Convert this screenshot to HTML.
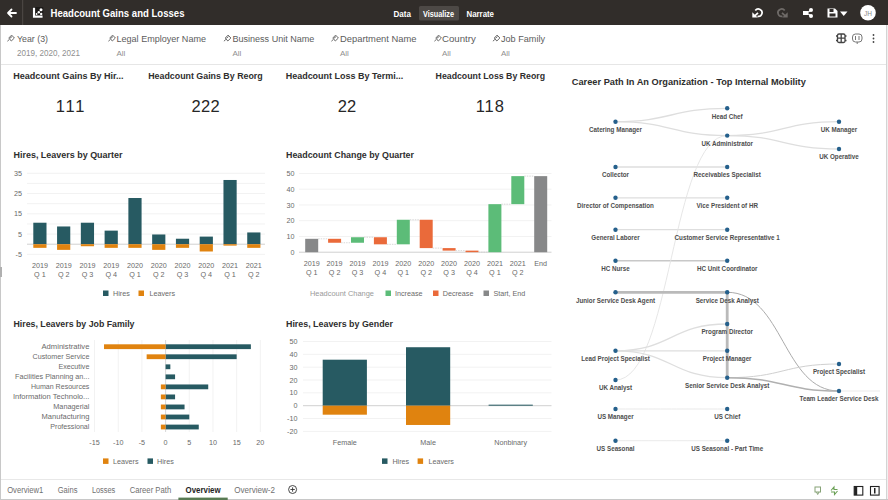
<!DOCTYPE html>
<html><head><meta charset="utf-8"><style>
html,body{margin:0;padding:0;background:#fff;width:888px;height:500px;overflow:hidden}
svg{display:block;font-family:"Liberation Sans", sans-serif}
</style></head><body>
<svg width="888" height="500" viewBox="0 0 888 500">
<rect width="888" height="500" fill="#fff"/>
<rect x="0" y="0" width="888" height="25" fill="#312d2a"/>
<rect x="22" y="0" width="1.2" height="25" fill="#4a4542"/>
<path d="M8 13 H16 M8 13 L11.5 9.5 M8 13 L11.5 16.5" stroke="#fff" stroke-width="1.8" fill="none" stroke-linecap="round"/>
<rect x="32.5" y="7" width="10.8" height="11" rx="0.8" fill="#1c1a18"/>
<path d="M34 7.8 V16.6 H42.6" stroke="#fff" stroke-width="2.2" fill="none"/>
<circle cx="41" cy="9.8" r="1.5" fill="#fff"/><circle cx="38.8" cy="12.2" r="1.2" fill="#fff"/><circle cx="41.2" cy="13.9" r="1.2" fill="#fff"/><circle cx="36.6" cy="14" r="0.9" fill="#fff"/>
<text x="50.5" y="16.8" font-size="11" fill="#fff" font-weight="bold" text-anchor="start" textLength="134" lengthAdjust="spacingAndGlyphs">Headcount Gains and Losses</text>
<rect x="419" y="6" width="40" height="14.5" rx="1.5" fill="#4d4946"/>
<text x="393.5" y="16.5" font-size="9" fill="#fff" font-weight="bold" text-anchor="start" textLength="17.5" lengthAdjust="spacingAndGlyphs">Data</text>
<text x="423" y="16.5" font-size="9" fill="#fff" font-weight="bold" text-anchor="start" textLength="31" lengthAdjust="spacingAndGlyphs">Visualize</text>
<text x="466.5" y="16.5" font-size="9" fill="#fff" font-weight="bold" text-anchor="start" textLength="27.5" lengthAdjust="spacingAndGlyphs">Narrate</text>
<path d="M755.3 10.6 A3.7 3.7 0 1 1 757.5 16.3" stroke="#fff" stroke-width="1.7" fill="none"/><path d="M758 12.8 L754.3 16.3" stroke="#fff" stroke-width="1.7"/><path d="M752.3 12.2 L752.3 17.6 L757.7 17.6 Z" fill="#fff"/>
<path d="M784.7 10.6 A3.7 3.7 0 1 0 782.5 16.3" stroke="#6f6b68" stroke-width="1.7" fill="none"/><path d="M782 12.8 L785.7 16.3" stroke="#6f6b68" stroke-width="1.7"/><path d="M787.7 12.2 L787.7 17.6 L782.3 17.6 Z" fill="#6f6b68"/>
<circle cx="811" cy="10" r="2" fill="#fff"/><circle cx="811" cy="16" r="2" fill="#fff"/><rect x="803" y="11" width="5" height="4" fill="#fff"/><path d="M807 13 L811 10 M807 13 L811 16" stroke="#fff" stroke-width="1.3"/>
<path d="M827.5 8.5 H835 L837.5 11 V17.5 H827.5 Z" fill="#fff"/><rect x="829.5" y="9" width="4" height="3" fill="#312d2a"/><rect x="829.5" y="13.5" width="6" height="3" fill="#312d2a"/>
<path d="M840 11.5 H847.5 L843.75 16 Z" fill="#fff"/>
<circle cx="868" cy="12.8" r="7.8" fill="#fff"/>
<text x="868" y="15.8" font-size="8" fill="#8a8a8a" font-weight="normal" text-anchor="middle" textLength="8" lengthAdjust="spacingAndGlyphs">JH</text>
<rect x="0" y="25" width="888" height="39" fill="#fff"/>
<rect x="0" y="64" width="888" height="1" fill="#e6e6e6"/>
<g transform="translate(7,34.8)" stroke="#6a6a6a" stroke-width="1" fill="none" stroke-linejoin="round"><path d="M1.8 3.2 L4.6 0.3 L7.4 3.2 L4.3 6.2 Z M3 3.4 L5 1.8"/><path d="M2.4 4.6 L0.4 6.4"/></g>
<text x="17" y="41.5" font-size="9.2" fill="#5c5c5c" font-weight="normal" text-anchor="start" textLength="31" lengthAdjust="spacingAndGlyphs">Year (3)</text>
<text x="17" y="55.8" font-size="8.8" fill="#8f8f8f" font-weight="normal" text-anchor="start" textLength="63" lengthAdjust="spacingAndGlyphs">2019, 2020, 2021</text>
<g transform="translate(108,34.8)" stroke="#6a6a6a" stroke-width="1" fill="none" stroke-linejoin="round"><path d="M1.8 3.2 L4.6 0.3 L7.4 3.2 L4.3 6.2 Z M3 3.4 L5 1.8"/><path d="M2.4 4.6 L0.4 6.4"/></g>
<text x="116.5" y="41.5" font-size="9.2" fill="#5c5c5c" font-weight="normal" text-anchor="start" textLength="89.5" lengthAdjust="spacingAndGlyphs">Legal Employer Name</text>
<text x="116.5" y="55.8" font-size="8" fill="#8f8f8f" font-weight="normal" text-anchor="start" >All</text>
<g transform="translate(223.5,34.8)" stroke="#6a6a6a" stroke-width="1" fill="none" stroke-linejoin="round"><path d="M1.8 3.2 L4.6 0.3 L7.4 3.2 L4.3 6.2 Z M3 3.4 L5 1.8"/><path d="M2.4 4.6 L0.4 6.4"/></g>
<text x="232.4" y="41.5" font-size="9.2" fill="#5c5c5c" font-weight="normal" text-anchor="start" textLength="82" lengthAdjust="spacingAndGlyphs">Business Unit Name</text>
<text x="232.4" y="55.8" font-size="8" fill="#8f8f8f" font-weight="normal" text-anchor="start" >All</text>
<g transform="translate(331,34.8)" stroke="#6a6a6a" stroke-width="1" fill="none" stroke-linejoin="round"><path d="M1.8 3.2 L4.6 0.3 L7.4 3.2 L4.3 6.2 Z M3 3.4 L5 1.8"/><path d="M2.4 4.6 L0.4 6.4"/></g>
<text x="340" y="41.5" font-size="9.2" fill="#5c5c5c" font-weight="normal" text-anchor="start" textLength="76.5" lengthAdjust="spacingAndGlyphs">Department Name</text>
<text x="340" y="55.8" font-size="8" fill="#8f8f8f" font-weight="normal" text-anchor="start" >All</text>
<g transform="translate(434,34.8)" stroke="#6a6a6a" stroke-width="1" fill="none" stroke-linejoin="round"><path d="M1.8 3.2 L4.6 0.3 L7.4 3.2 L4.3 6.2 Z M3 3.4 L5 1.8"/><path d="M2.4 4.6 L0.4 6.4"/></g>
<text x="442" y="41.5" font-size="9.2" fill="#5c5c5c" font-weight="normal" text-anchor="start" textLength="33.8" lengthAdjust="spacingAndGlyphs">Country</text>
<text x="442" y="55.8" font-size="8" fill="#8f8f8f" font-weight="normal" text-anchor="start" >All</text>
<g transform="translate(492.5,34.8)" stroke="#6a6a6a" stroke-width="1" fill="none" stroke-linejoin="round"><path d="M1.8 3.2 L4.6 0.3 L7.4 3.2 L4.3 6.2 Z M3 3.4 L5 1.8"/><path d="M2.4 4.6 L0.4 6.4"/></g>
<text x="501" y="41.5" font-size="9.2" fill="#5c5c5c" font-weight="normal" text-anchor="start" textLength="44" lengthAdjust="spacingAndGlyphs">Job Family</text>
<text x="501" y="55.8" font-size="8" fill="#8f8f8f" font-weight="normal" text-anchor="start" >All</text>
<g stroke="#444" stroke-width="1.3" fill="none"><rect x="837.5" y="34" width="7.5" height="8.5" rx="1.5"/><path d="M841.2 34 V42.5 M837.5 38.2 H845 M836 36 H837.5 M836 40.5 H837.5 M845 36 H846.5 M845 40.5 H846.5"/></g>
<g stroke="#777" stroke-width="1" fill="none"><rect x="852.5" y="34" width="9.5" height="8" rx="3"/><path d="M855.5 36 V40 M859 36 V40 M857.2 42 V44"/></g>
<circle cx="873.5" cy="35" r="0.9" fill="#444"/><circle cx="873.5" cy="38.5" r="0.9" fill="#444"/><circle cx="873.5" cy="42" r="0.9" fill="#444"/>
<rect x="0" y="25" width="1" height="475" fill="#c8c8c8"/>
<rect x="0" y="267" width="2" height="10" fill="#b0b0b0"/>
<rect x="886" y="25" width="1" height="475" fill="#d4d4d4"/><rect x="887" y="25" width="1" height="475" fill="#f0f0f0"/>
<text x="13.2" y="79.4" font-size="9" fill="#2e2e2e" font-weight="bold" text-anchor="start" textLength="110.4" lengthAdjust="spacingAndGlyphs">Headcount Gains By Hir...</text>
<text x="70" y="112.2" font-size="16.5" fill="#262626" font-weight="normal" text-anchor="middle" textLength="28.7" lengthAdjust="spacing">111</text>
<text x="148.2" y="79.4" font-size="9" fill="#2e2e2e" font-weight="bold" text-anchor="start" textLength="114.5" lengthAdjust="spacingAndGlyphs">Headcount Gains By Reorg</text>
<text x="205.6" y="112.2" font-size="16.5" fill="#262626" font-weight="normal" text-anchor="middle" textLength="28.4" lengthAdjust="spacing">222</text>
<text x="285.7" y="79.4" font-size="9" fill="#2e2e2e" font-weight="bold" text-anchor="start" textLength="117.5" lengthAdjust="spacingAndGlyphs">Headcount Loss By Termi...</text>
<text x="347" y="112.2" font-size="16.5" fill="#262626" font-weight="normal" text-anchor="middle" textLength="18.4" lengthAdjust="spacing">22</text>
<text x="435.6" y="79.4" font-size="9" fill="#2e2e2e" font-weight="bold" text-anchor="start" textLength="109.4" lengthAdjust="spacingAndGlyphs">Headcount Loss By Reorg</text>
<text x="489.8" y="112.2" font-size="16.5" fill="#262626" font-weight="normal" text-anchor="middle" textLength="28.2" lengthAdjust="spacing">118</text>
<text x="13.5" y="157.9" font-size="9" fill="#2e2e2e" font-weight="bold" text-anchor="start" textLength="109" lengthAdjust="spacingAndGlyphs">Hires, Leavers by Quarter</text>
<rect x="27" y="172.79" width="238" height="1" fill="#f2f2f2"/>
<text x="22" y="175.89" font-size="7.9" fill="#6a6a6a" font-weight="normal" text-anchor="end" textLength="8.00" lengthAdjust="spacingAndGlyphs">35</text>
<rect x="27" y="182.92" width="238" height="1" fill="#f2f2f2"/>
<rect x="27" y="193.05" width="238" height="1" fill="#f2f2f2"/>
<text x="22" y="196.15" font-size="7.9" fill="#6a6a6a" font-weight="normal" text-anchor="end" textLength="8.00" lengthAdjust="spacingAndGlyphs">25</text>
<rect x="27" y="203.18" width="238" height="1" fill="#f2f2f2"/>
<rect x="27" y="213.31" width="238" height="1" fill="#f2f2f2"/>
<text x="22" y="216.41" font-size="7.9" fill="#6a6a6a" font-weight="normal" text-anchor="end" textLength="8.00" lengthAdjust="spacingAndGlyphs">15</text>
<rect x="27" y="223.44" width="238" height="1" fill="#f2f2f2"/>
<rect x="27" y="233.57" width="238" height="1" fill="#f2f2f2"/>
<text x="22" y="236.67" font-size="7.9" fill="#6a6a6a" font-weight="normal" text-anchor="end" textLength="4.00" lengthAdjust="spacingAndGlyphs">5</text>
<rect x="27" y="253.82999999999998" width="238" height="1" fill="#f2f2f2"/>
<text x="22" y="256.93" font-size="7.9" fill="#6a6a6a" font-weight="normal" text-anchor="end" textLength="6.39" lengthAdjust="spacingAndGlyphs">-5</text>
<rect x="27" y="243.7" width="238" height="1" fill="#d0d0d0"/>
<rect x="33.30" y="222.72" width="13.2" height="21.48" fill="#275a62"/>
<rect x="33.30" y="244.20" width="13.2" height="3.65" fill="#e0830f"/>
<text x="39.9" y="268" font-size="7.9" fill="#6a6a6a" font-weight="normal" text-anchor="middle" textLength="15.99" lengthAdjust="spacingAndGlyphs">2019</text>
<text x="39.9" y="277" font-size="7.9" fill="#6a6a6a" font-weight="normal" text-anchor="middle" textLength="11.59" lengthAdjust="spacingAndGlyphs">Q 1</text>
<rect x="57.07" y="226.47" width="13.2" height="17.73" fill="#275a62"/>
<rect x="57.07" y="244.20" width="13.2" height="5.67" fill="#e0830f"/>
<text x="63.669999999999995" y="268" font-size="7.9" fill="#6a6a6a" font-weight="normal" text-anchor="middle" textLength="15.99" lengthAdjust="spacingAndGlyphs">2019</text>
<text x="63.669999999999995" y="277" font-size="7.9" fill="#6a6a6a" font-weight="normal" text-anchor="middle" textLength="11.59" lengthAdjust="spacingAndGlyphs">Q 2</text>
<rect x="80.84" y="222.72" width="13.2" height="21.48" fill="#275a62"/>
<rect x="80.84" y="244.20" width="13.2" height="2.03" fill="#e0830f"/>
<text x="87.44" y="268" font-size="7.9" fill="#6a6a6a" font-weight="normal" text-anchor="middle" textLength="15.99" lengthAdjust="spacingAndGlyphs">2019</text>
<text x="87.44" y="277" font-size="7.9" fill="#6a6a6a" font-weight="normal" text-anchor="middle" textLength="11.59" lengthAdjust="spacingAndGlyphs">Q 3</text>
<rect x="104.61" y="230.63" width="13.2" height="13.57" fill="#275a62"/>
<rect x="104.61" y="244.20" width="13.2" height="3.65" fill="#e0830f"/>
<text x="111.21" y="268" font-size="7.9" fill="#6a6a6a" font-weight="normal" text-anchor="middle" textLength="15.99" lengthAdjust="spacingAndGlyphs">2019</text>
<text x="111.21" y="277" font-size="7.9" fill="#6a6a6a" font-weight="normal" text-anchor="middle" textLength="11.59" lengthAdjust="spacingAndGlyphs">Q 4</text>
<rect x="128.38" y="198.01" width="13.2" height="46.19" fill="#275a62"/>
<rect x="128.38" y="244.20" width="13.2" height="3.65" fill="#e0830f"/>
<text x="134.98" y="268" font-size="7.9" fill="#6a6a6a" font-weight="normal" text-anchor="middle" textLength="15.99" lengthAdjust="spacingAndGlyphs">2020</text>
<text x="134.98" y="277" font-size="7.9" fill="#6a6a6a" font-weight="normal" text-anchor="middle" textLength="11.59" lengthAdjust="spacingAndGlyphs">Q 1</text>
<rect x="152.15" y="234.48" width="13.2" height="9.72" fill="#275a62"/>
<rect x="152.15" y="244.20" width="13.2" height="5.67" fill="#e0830f"/>
<text x="158.74999999999997" y="268" font-size="7.9" fill="#6a6a6a" font-weight="normal" text-anchor="middle" textLength="15.99" lengthAdjust="spacingAndGlyphs">2020</text>
<text x="158.74999999999997" y="277" font-size="7.9" fill="#6a6a6a" font-weight="normal" text-anchor="middle" textLength="11.59" lengthAdjust="spacingAndGlyphs">Q 2</text>
<rect x="175.92" y="238.73" width="13.2" height="5.47" fill="#275a62"/>
<rect x="175.92" y="244.20" width="13.2" height="3.65" fill="#e0830f"/>
<text x="182.52" y="268" font-size="7.9" fill="#6a6a6a" font-weight="normal" text-anchor="middle" textLength="15.99" lengthAdjust="spacingAndGlyphs">2020</text>
<text x="182.52" y="277" font-size="7.9" fill="#6a6a6a" font-weight="normal" text-anchor="middle" textLength="11.59" lengthAdjust="spacingAndGlyphs">Q 3</text>
<rect x="199.69" y="236.60" width="13.2" height="7.60" fill="#275a62"/>
<rect x="199.69" y="244.20" width="13.2" height="7.29" fill="#e0830f"/>
<text x="206.29" y="268" font-size="7.9" fill="#6a6a6a" font-weight="normal" text-anchor="middle" textLength="15.99" lengthAdjust="spacingAndGlyphs">2020</text>
<text x="206.29" y="277" font-size="7.9" fill="#6a6a6a" font-weight="normal" text-anchor="middle" textLength="11.59" lengthAdjust="spacingAndGlyphs">Q 4</text>
<rect x="223.46" y="179.98" width="13.2" height="64.22" fill="#275a62"/>
<rect x="223.46" y="244.20" width="13.2" height="1.42" fill="#e0830f"/>
<text x="230.05999999999997" y="268" font-size="7.9" fill="#6a6a6a" font-weight="normal" text-anchor="middle" textLength="15.99" lengthAdjust="spacingAndGlyphs">2021</text>
<text x="230.05999999999997" y="277" font-size="7.9" fill="#6a6a6a" font-weight="normal" text-anchor="middle" textLength="11.59" lengthAdjust="spacingAndGlyphs">Q 1</text>
<rect x="247.23" y="232.45" width="13.2" height="11.75" fill="#275a62"/>
<rect x="247.23" y="244.20" width="13.2" height="3.65" fill="#e0830f"/>
<text x="253.83" y="268" font-size="7.9" fill="#6a6a6a" font-weight="normal" text-anchor="middle" textLength="15.99" lengthAdjust="spacingAndGlyphs">2021</text>
<text x="253.83" y="277" font-size="7.9" fill="#6a6a6a" font-weight="normal" text-anchor="middle" textLength="11.59" lengthAdjust="spacingAndGlyphs">Q 2</text>
<rect x="103" y="290.5" width="5.5" height="5.5" fill="#275a62"/>
<text x="113" y="296" font-size="7.9" fill="#6a6a6a" font-weight="normal" text-anchor="start" textLength="16.78" lengthAdjust="spacingAndGlyphs">Hires</text>
<rect x="138.5" y="290.5" width="5.5" height="5.5" fill="#e0830f"/>
<text x="149.5" y="296" font-size="7.9" fill="#6a6a6a" font-weight="normal" text-anchor="start" textLength="25.57" lengthAdjust="spacingAndGlyphs">Leavers</text>
<text x="286" y="157.9" font-size="9" fill="#2e2e2e" font-weight="bold" text-anchor="start" textLength="128" lengthAdjust="spacingAndGlyphs">Headcount Change by Quarter</text>
<rect x="299" y="172.95" width="252.5" height="1" fill="#f2f2f2"/>
<text x="294.5" y="176.04999999999998" font-size="7.9" fill="#6a6a6a" font-weight="normal" text-anchor="end" textLength="8.00" lengthAdjust="spacingAndGlyphs">50</text>
<rect x="299" y="188.7" width="252.5" height="1" fill="#f2f2f2"/>
<text x="294.5" y="191.79999999999998" font-size="7.9" fill="#6a6a6a" font-weight="normal" text-anchor="end" textLength="8.00" lengthAdjust="spacingAndGlyphs">40</text>
<rect x="299" y="204.45" width="252.5" height="1" fill="#f2f2f2"/>
<text x="294.5" y="207.54999999999998" font-size="7.9" fill="#6a6a6a" font-weight="normal" text-anchor="end" textLength="8.00" lengthAdjust="spacingAndGlyphs">30</text>
<rect x="299" y="220.2" width="252.5" height="1" fill="#f2f2f2"/>
<text x="294.5" y="223.29999999999998" font-size="7.9" fill="#6a6a6a" font-weight="normal" text-anchor="end" textLength="8.00" lengthAdjust="spacingAndGlyphs">20</text>
<rect x="299" y="235.95" width="252.5" height="1" fill="#f2f2f2"/>
<text x="294.5" y="239.04999999999998" font-size="7.9" fill="#6a6a6a" font-weight="normal" text-anchor="end" textLength="8.00" lengthAdjust="spacingAndGlyphs">10</text>
<rect x="299" y="251.7" width="252.5" height="1" fill="#d0d0d0"/>
<text x="294.5" y="254.79999999999998" font-size="7.9" fill="#6a6a6a" font-weight="normal" text-anchor="end" textLength="4.00" lengthAdjust="spacingAndGlyphs">0</text>
<rect x="305.20" y="238.81" width="13" height="13.39" fill="#878889"/>
<line x1="318.20" y1="238.81" x2="328.10" y2="238.81" stroke="#cfcfcf" stroke-width="0.8" stroke-dasharray="1.5,1"/>
<text x="311.7" y="265.5" font-size="7.9" fill="#6a6a6a" font-weight="normal" text-anchor="middle" textLength="15.99" lengthAdjust="spacingAndGlyphs">2019</text>
<text x="311.7" y="274.5" font-size="7.9" fill="#6a6a6a" font-weight="normal" text-anchor="middle" textLength="11.59" lengthAdjust="spacingAndGlyphs">Q 1</text>
<rect x="328.10" y="238.81" width="13" height="3.94" fill="#ea6a3a"/>
<line x1="341.10" y1="242.75" x2="351.00" y2="242.75" stroke="#cfcfcf" stroke-width="0.8" stroke-dasharray="1.5,1"/>
<text x="334.59999999999997" y="265.5" font-size="7.9" fill="#6a6a6a" font-weight="normal" text-anchor="middle" textLength="15.99" lengthAdjust="spacingAndGlyphs">2019</text>
<text x="334.59999999999997" y="274.5" font-size="7.9" fill="#6a6a6a" font-weight="normal" text-anchor="middle" textLength="11.59" lengthAdjust="spacingAndGlyphs">Q 2</text>
<rect x="351.00" y="237.24" width="13" height="5.51" fill="#5cbc78"/>
<line x1="364.00" y1="237.24" x2="373.90" y2="237.24" stroke="#cfcfcf" stroke-width="0.8" stroke-dasharray="1.5,1"/>
<text x="357.5" y="265.5" font-size="7.9" fill="#6a6a6a" font-weight="normal" text-anchor="middle" textLength="15.99" lengthAdjust="spacingAndGlyphs">2019</text>
<text x="357.5" y="274.5" font-size="7.9" fill="#6a6a6a" font-weight="normal" text-anchor="middle" textLength="11.59" lengthAdjust="spacingAndGlyphs">Q 3</text>
<rect x="373.90" y="237.24" width="13" height="7.09" fill="#ea6a3a"/>
<line x1="386.90" y1="244.32" x2="396.80" y2="244.32" stroke="#cfcfcf" stroke-width="0.8" stroke-dasharray="1.5,1"/>
<text x="380.4" y="265.5" font-size="7.9" fill="#6a6a6a" font-weight="normal" text-anchor="middle" textLength="15.99" lengthAdjust="spacingAndGlyphs">2019</text>
<text x="380.4" y="274.5" font-size="7.9" fill="#6a6a6a" font-weight="normal" text-anchor="middle" textLength="11.59" lengthAdjust="spacingAndGlyphs">Q 4</text>
<rect x="396.80" y="219.75" width="13" height="24.57" fill="#5cbc78"/>
<line x1="409.80" y1="219.75" x2="419.70" y2="219.75" stroke="#cfcfcf" stroke-width="0.8" stroke-dasharray="1.5,1"/>
<text x="403.29999999999995" y="265.5" font-size="7.9" fill="#6a6a6a" font-weight="normal" text-anchor="middle" textLength="15.99" lengthAdjust="spacingAndGlyphs">2020</text>
<text x="403.29999999999995" y="274.5" font-size="7.9" fill="#6a6a6a" font-weight="normal" text-anchor="middle" textLength="11.59" lengthAdjust="spacingAndGlyphs">Q 1</text>
<rect x="419.70" y="219.75" width="13" height="28.35" fill="#ea6a3a"/>
<line x1="432.70" y1="248.10" x2="442.60" y2="248.10" stroke="#cfcfcf" stroke-width="0.8" stroke-dasharray="1.5,1"/>
<text x="426.2" y="265.5" font-size="7.9" fill="#6a6a6a" font-weight="normal" text-anchor="middle" textLength="15.99" lengthAdjust="spacingAndGlyphs">2020</text>
<text x="426.2" y="274.5" font-size="7.9" fill="#6a6a6a" font-weight="normal" text-anchor="middle" textLength="11.59" lengthAdjust="spacingAndGlyphs">Q 2</text>
<rect x="442.60" y="248.10" width="13" height="2.52" fill="#ea6a3a"/>
<line x1="455.60" y1="250.62" x2="465.50" y2="250.62" stroke="#cfcfcf" stroke-width="0.8" stroke-dasharray="1.5,1"/>
<text x="449.09999999999997" y="265.5" font-size="7.9" fill="#6a6a6a" font-weight="normal" text-anchor="middle" textLength="15.99" lengthAdjust="spacingAndGlyphs">2020</text>
<text x="449.09999999999997" y="274.5" font-size="7.9" fill="#6a6a6a" font-weight="normal" text-anchor="middle" textLength="11.59" lengthAdjust="spacingAndGlyphs">Q 3</text>
<rect x="465.50" y="250.62" width="13" height="1.57" fill="#ea6a3a"/>
<line x1="478.50" y1="252.20" x2="488.40" y2="252.20" stroke="#cfcfcf" stroke-width="0.8" stroke-dasharray="1.5,1"/>
<text x="472.0" y="265.5" font-size="7.9" fill="#6a6a6a" font-weight="normal" text-anchor="middle" textLength="15.99" lengthAdjust="spacingAndGlyphs">2020</text>
<text x="472.0" y="274.5" font-size="7.9" fill="#6a6a6a" font-weight="normal" text-anchor="middle" textLength="11.59" lengthAdjust="spacingAndGlyphs">Q 4</text>
<rect x="488.40" y="204.16" width="13" height="48.04" fill="#5cbc78"/>
<line x1="501.40" y1="204.16" x2="511.30" y2="204.16" stroke="#cfcfcf" stroke-width="0.8" stroke-dasharray="1.5,1"/>
<text x="494.9" y="265.5" font-size="7.9" fill="#6a6a6a" font-weight="normal" text-anchor="middle" textLength="15.99" lengthAdjust="spacingAndGlyphs">2021</text>
<text x="494.9" y="274.5" font-size="7.9" fill="#6a6a6a" font-weight="normal" text-anchor="middle" textLength="11.59" lengthAdjust="spacingAndGlyphs">Q 1</text>
<rect x="511.30" y="176.13" width="13" height="28.03" fill="#5cbc78"/>
<line x1="524.30" y1="176.13" x2="534.20" y2="176.13" stroke="#cfcfcf" stroke-width="0.8" stroke-dasharray="1.5,1"/>
<text x="517.8" y="265.5" font-size="7.9" fill="#6a6a6a" font-weight="normal" text-anchor="middle" textLength="15.99" lengthAdjust="spacingAndGlyphs">2021</text>
<text x="517.8" y="274.5" font-size="7.9" fill="#6a6a6a" font-weight="normal" text-anchor="middle" textLength="11.59" lengthAdjust="spacingAndGlyphs">Q 2</text>
<rect x="534.20" y="176.13" width="13" height="76.07" fill="#878889"/>
<text x="540.7" y="265.5" font-size="7.9" fill="#6a6a6a" font-weight="normal" text-anchor="middle" textLength="12.79" lengthAdjust="spacingAndGlyphs">End</text>
<text x="310" y="296" font-size="7.5" fill="#9a9a9a" font-weight="normal" text-anchor="start" textLength="64" lengthAdjust="spacingAndGlyphs">Headcount Change</text>
<rect x="385.5" y="290.5" width="5.5" height="5.5" fill="#5cbc78"/>
<text x="395" y="296" font-size="7.9" fill="#6a6a6a" font-weight="normal" text-anchor="start" textLength="27.57" lengthAdjust="spacingAndGlyphs">Increase</text>
<rect x="433" y="290.5" width="5.5" height="5.5" fill="#ea6a3a"/>
<text x="442.7" y="296" font-size="7.9" fill="#6a6a6a" font-weight="normal" text-anchor="start" textLength="30.77" lengthAdjust="spacingAndGlyphs">Decrease</text>
<rect x="483.5" y="290.5" width="5.5" height="5.5" fill="#878889"/>
<text x="493.4" y="296" font-size="7.9" fill="#6a6a6a" font-weight="normal" text-anchor="start" textLength="31.97" lengthAdjust="spacingAndGlyphs">Start, End</text>
<text x="13.5" y="326.6" font-size="9" fill="#2e2e2e" font-weight="bold" text-anchor="start" textLength="121" lengthAdjust="spacingAndGlyphs">Hires, Leavers by Job Family</text>
<rect x="94.04" y="340" width="1" height="92" fill="#f2f2f2"/>
<text x="94.54499999999999" y="444.5" font-size="7.9" fill="#6a6a6a" font-weight="normal" text-anchor="middle" textLength="10.39" lengthAdjust="spacingAndGlyphs">-15</text>
<rect x="117.73" y="340" width="1" height="92" fill="#f2f2f2"/>
<text x="118.22999999999999" y="444.5" font-size="7.9" fill="#6a6a6a" font-weight="normal" text-anchor="middle" textLength="10.39" lengthAdjust="spacingAndGlyphs">-10</text>
<rect x="141.41" y="340" width="1" height="92" fill="#f2f2f2"/>
<text x="141.915" y="444.5" font-size="7.9" fill="#6a6a6a" font-weight="normal" text-anchor="middle" textLength="6.39" lengthAdjust="spacingAndGlyphs">-5</text>
<rect x="165.10" y="340" width="1" height="92" fill="#d8d8d8"/>
<text x="165.6" y="444.5" font-size="7.9" fill="#6a6a6a" font-weight="normal" text-anchor="middle" textLength="4.00" lengthAdjust="spacingAndGlyphs">0</text>
<rect x="188.78" y="340" width="1" height="92" fill="#f2f2f2"/>
<text x="189.285" y="444.5" font-size="7.9" fill="#6a6a6a" font-weight="normal" text-anchor="middle" textLength="4.00" lengthAdjust="spacingAndGlyphs">5</text>
<rect x="212.47" y="340" width="1" height="92" fill="#f2f2f2"/>
<text x="212.97" y="444.5" font-size="7.9" fill="#6a6a6a" font-weight="normal" text-anchor="middle" textLength="8.00" lengthAdjust="spacingAndGlyphs">10</text>
<rect x="236.16" y="340" width="1" height="92" fill="#f2f2f2"/>
<text x="236.655" y="444.5" font-size="7.9" fill="#6a6a6a" font-weight="normal" text-anchor="middle" textLength="8.00" lengthAdjust="spacingAndGlyphs">15</text>
<rect x="259.84" y="340" width="1" height="92" fill="#f2f2f2"/>
<text x="260.34000000000003" y="444.5" font-size="7.9" fill="#6a6a6a" font-weight="normal" text-anchor="middle" textLength="8.00" lengthAdjust="spacingAndGlyphs">20</text>
<text x="89.4" y="349.0" font-size="7.6" fill="#6a6a6a" font-weight="normal" text-anchor="end" textLength="47.9" lengthAdjust="spacingAndGlyphs">Administrative</text>
<rect x="165.60" y="344.30" width="85.27" height="4.8" fill="#275a62"/>
<rect x="104.02" y="344.30" width="61.58" height="4.8" fill="#e0830f"/>
<text x="89.4" y="359.04" font-size="7.6" fill="#6a6a6a" font-weight="normal" text-anchor="end" textLength="56.8" lengthAdjust="spacingAndGlyphs">Customer Service</text>
<rect x="165.60" y="354.34" width="71.06" height="4.8" fill="#275a62"/>
<rect x="146.65" y="354.34" width="18.95" height="4.8" fill="#e0830f"/>
<text x="89.4" y="369.08" font-size="7.6" fill="#6a6a6a" font-weight="normal" text-anchor="end" textLength="31.0" lengthAdjust="spacingAndGlyphs">Executive</text>
<rect x="165.60" y="364.38" width="4.74" height="4.8" fill="#275a62"/>
<text x="89.4" y="379.12" font-size="7.6" fill="#6a6a6a" font-weight="normal" text-anchor="end" textLength="74.4" lengthAdjust="spacingAndGlyphs">Facilities Planning an...</text>
<rect x="165.60" y="374.42" width="9.47" height="4.8" fill="#275a62"/>
<text x="89.4" y="389.16" font-size="7.6" fill="#6a6a6a" font-weight="normal" text-anchor="end" textLength="58.5" lengthAdjust="spacingAndGlyphs">Human Resources</text>
<rect x="165.60" y="384.46" width="42.63" height="4.8" fill="#275a62"/>
<rect x="160.86" y="384.46" width="4.74" height="4.8" fill="#e0830f"/>
<text x="89.4" y="399.2" font-size="7.6" fill="#6a6a6a" font-weight="normal" text-anchor="end" textLength="76.5" lengthAdjust="spacingAndGlyphs">Information Technolo...</text>
<rect x="165.60" y="394.50" width="9.47" height="4.8" fill="#275a62"/>
<rect x="160.86" y="394.50" width="4.74" height="4.8" fill="#e0830f"/>
<text x="89.4" y="409.24" font-size="7.6" fill="#6a6a6a" font-weight="normal" text-anchor="end" textLength="36.1" lengthAdjust="spacingAndGlyphs">Managerial</text>
<rect x="165.60" y="404.54" width="18.95" height="4.8" fill="#275a62"/>
<rect x="160.86" y="404.54" width="4.74" height="4.8" fill="#e0830f"/>
<text x="89.4" y="419.28000000000003" font-size="7.6" fill="#6a6a6a" font-weight="normal" text-anchor="end" textLength="47.9" lengthAdjust="spacingAndGlyphs">Manufacturing</text>
<rect x="165.60" y="414.58" width="23.69" height="4.8" fill="#275a62"/>
<rect x="160.86" y="414.58" width="4.74" height="4.8" fill="#e0830f"/>
<text x="89.4" y="429.32" font-size="7.6" fill="#6a6a6a" font-weight="normal" text-anchor="end" textLength="39.1" lengthAdjust="spacingAndGlyphs">Professional</text>
<rect x="165.60" y="424.62" width="33.16" height="4.8" fill="#275a62"/>
<rect x="160.86" y="424.62" width="4.74" height="4.8" fill="#e0830f"/>
<rect x="103" y="458.4" width="5.5" height="5.5" fill="#e0830f"/>
<text x="113" y="463.9" font-size="7.9" fill="#6a6a6a" font-weight="normal" text-anchor="start" textLength="25.57" lengthAdjust="spacingAndGlyphs">Leavers</text>
<rect x="147.5" y="458.4" width="5.5" height="5.5" fill="#275a62"/>
<text x="157" y="463.9" font-size="7.9" fill="#6a6a6a" font-weight="normal" text-anchor="start" textLength="16.78" lengthAdjust="spacingAndGlyphs">Hires</text>
<text x="286" y="326.6" font-size="9" fill="#2e2e2e" font-weight="bold" text-anchor="start" textLength="107" lengthAdjust="spacingAndGlyphs">Hires, Leavers by Gender</text>
<rect x="303" y="340.95" width="248.5" height="1" fill="#f2f2f2"/>
<text x="297.5" y="344.05" font-size="7.9" fill="#6a6a6a" font-weight="normal" text-anchor="end" textLength="8.00" lengthAdjust="spacingAndGlyphs">50</text>
<rect x="303" y="353.80" width="248.5" height="1" fill="#f2f2f2"/>
<text x="297.5" y="356.90000000000003" font-size="7.9" fill="#6a6a6a" font-weight="normal" text-anchor="end" textLength="8.00" lengthAdjust="spacingAndGlyphs">40</text>
<rect x="303" y="366.65" width="248.5" height="1" fill="#f2f2f2"/>
<text x="297.5" y="369.75" font-size="7.9" fill="#6a6a6a" font-weight="normal" text-anchor="end" textLength="8.00" lengthAdjust="spacingAndGlyphs">30</text>
<rect x="303" y="379.50" width="248.5" height="1" fill="#f2f2f2"/>
<text x="297.5" y="382.6" font-size="7.9" fill="#6a6a6a" font-weight="normal" text-anchor="end" textLength="8.00" lengthAdjust="spacingAndGlyphs">20</text>
<rect x="303" y="392.35" width="248.5" height="1" fill="#f2f2f2"/>
<text x="297.5" y="395.45" font-size="7.9" fill="#6a6a6a" font-weight="normal" text-anchor="end" textLength="8.00" lengthAdjust="spacingAndGlyphs">10</text>
<rect x="303" y="405.20" width="248.5" height="1" fill="#d0d0d0"/>
<text x="297.5" y="408.3" font-size="7.9" fill="#6a6a6a" font-weight="normal" text-anchor="end" textLength="4.00" lengthAdjust="spacingAndGlyphs">0</text>
<rect x="303" y="418.05" width="248.5" height="1" fill="#f2f2f2"/>
<text x="297.5" y="421.15000000000003" font-size="7.9" fill="#6a6a6a" font-weight="normal" text-anchor="end" textLength="10.39" lengthAdjust="spacingAndGlyphs">-10</text>
<rect x="303" y="430.90" width="248.5" height="1" fill="#f2f2f2"/>
<text x="297.5" y="434.0" font-size="7.9" fill="#6a6a6a" font-weight="normal" text-anchor="end" textLength="10.39" lengthAdjust="spacingAndGlyphs">-20</text>
<rect x="322.7" y="359.70" width="44.2" height="46.00" fill="#275a62"/>
<rect x="322.7" y="405.70" width="44.2" height="8.99" fill="#e0830f"/>
<text x="344.8" y="445" font-size="7.9" fill="#6a6a6a" font-weight="normal" text-anchor="middle" textLength="23.97" lengthAdjust="spacingAndGlyphs">Female</text>
<rect x="406" y="347.23" width="44.2" height="58.47" fill="#275a62"/>
<rect x="406" y="405.70" width="44.2" height="19.27" fill="#e0830f"/>
<text x="428.1" y="445" font-size="7.9" fill="#6a6a6a" font-weight="normal" text-anchor="middle" textLength="15.58" lengthAdjust="spacingAndGlyphs">Male</text>
<rect x="488.6" y="404.67" width="44.2" height="1.03" fill="#275a62"/>
<text x="510.70000000000005" y="445" font-size="7.9" fill="#6a6a6a" font-weight="normal" text-anchor="middle" textLength="32.77" lengthAdjust="spacingAndGlyphs">Nonbinary</text>
<rect x="382" y="458.4" width="5.5" height="5.5" fill="#275a62"/>
<text x="392.4" y="463.9" font-size="7.9" fill="#6a6a6a" font-weight="normal" text-anchor="start" textLength="16.78" lengthAdjust="spacingAndGlyphs">Hires</text>
<rect x="417.6" y="458.4" width="5.5" height="5.5" fill="#e0830f"/>
<text x="428.4" y="463.9" font-size="7.9" fill="#6a6a6a" font-weight="normal" text-anchor="start" textLength="25.57" lengthAdjust="spacingAndGlyphs">Leavers</text>
<text x="571.8" y="85.2" font-size="9.2" fill="#2e2e2e" font-weight="bold" text-anchor="start" textLength="234" lengthAdjust="spacingAndGlyphs">Career Path In An Organization - Top Internal Mobility</text>
<path d="M615.5 121.7 C671.35 121.7 671.35 108.3 727.2 108.3" stroke="#dedede" stroke-width="1.3" fill="none"/>
<path d="M615.5 121.7 C671.35 121.7 671.35 135.6 727.2 135.6" stroke="#dedede" stroke-width="1.3" fill="none"/>
<path d="M727.2 135.6 C783.1 135.6 783.1 121.7 839 121.7" stroke="#dedede" stroke-width="1.3" fill="none"/>
<path d="M727.2 135.6 C783.1 135.6 783.1 149 839 149" stroke="#dedede" stroke-width="1.3" fill="none"/>
<path d="M615.5 167 C671.35 167 671.35 167 727.2 167" stroke="#dedede" stroke-width="1.3" fill="none"/>
<path d="M615.5 197.8 C671.35 197.8 671.35 197.8 727.2 197.8" stroke="#dedede" stroke-width="1.3" fill="none"/>
<path d="M615.5 229.7 C671.35 229.7 671.35 229.7 727.2 229.7" stroke="#dedede" stroke-width="1.3" fill="none"/>
<path d="M615.5 260.8 C671.35 260.8 671.35 260.8 727.2 260.8" stroke="#c8c8c8" stroke-width="1.4" fill="none"/>
<path d="M615.5 380 C671.35 380 671.35 135.6 727.2 135.6" stroke="#e3e3e3" stroke-width="0.9" fill="none"/>
<path d="M615.5 350.8 C671.35 350.8 671.35 324 727.2 324" stroke="#dedede" stroke-width="1.3" fill="none"/>
<path d="M615.5 350.8 C671.35 350.8 671.35 350.8 727.2 350.8" stroke="#dedede" stroke-width="1.3" fill="none"/>
<path d="M615.5 350.8 C671.35 350.8 671.35 377.7 727.2 377.7" stroke="#dedede" stroke-width="1.3" fill="none"/>
<path d="M727.2 292.3 C783.1 292.3 783.1 391 839 391" stroke="#ababab" stroke-width="1.0" fill="none"/>
<path d="M727.2 377.7 C783.1 377.7 783.1 364 839 364" stroke="#d0d0d0" stroke-width="1.0" fill="none"/>
<path d="M727.2 377.7 C783.1 377.7 783.1 391 839 391" stroke="#b0b0b0" stroke-width="1.5" fill="none"/>
<path d="M615.5 409 C671.35 409 671.35 409 727.2 409" stroke="#e3e3e3" stroke-width="0.8" fill="none"/>
<path d="M615.5 440.7 C671.35 440.7 671.35 440.7 727.2 440.7" stroke="#e3e3e3" stroke-width="0.8" fill="none"/>
<line x1="839" y1="391" x2="880" y2="391" stroke="#e6e6e6" stroke-width="0.8"/>
<line x1="615.5" y1="292.3" x2="727.2" y2="292.3" stroke="#bababa" stroke-width="2.8"/>
<line x1="727.2" y1="292.3" x2="727.2" y2="377.7" stroke="#bababa" stroke-width="2.8"/>
<circle cx="615.5" cy="121.7" r="2.2" fill="#25608c"/>
<text x="615.5" y="132.0" font-size="7.2" fill="#4d4d4d" font-weight="bold" text-anchor="middle" textLength="52.9" lengthAdjust="spacingAndGlyphs">Catering Manager</text>
<circle cx="727.2" cy="108.3" r="2.2" fill="#25608c"/>
<text x="727.2" y="118.6" font-size="7.2" fill="#4d4d4d" font-weight="bold" text-anchor="middle" textLength="31.0" lengthAdjust="spacingAndGlyphs">Head Chef</text>
<circle cx="727.2" cy="135.6" r="2.2" fill="#25608c"/>
<text x="727.2" y="145.9" font-size="7.2" fill="#4d4d4d" font-weight="bold" text-anchor="middle" textLength="51.6" lengthAdjust="spacingAndGlyphs">UK Administrator</text>
<circle cx="839" cy="121.7" r="2.2" fill="#25608c"/>
<text x="839" y="132.0" font-size="7.2" fill="#4d4d4d" font-weight="bold" text-anchor="middle" textLength="36.5" lengthAdjust="spacingAndGlyphs">UK Manager</text>
<circle cx="839" cy="149" r="2.2" fill="#25608c"/>
<text x="839" y="159.3" font-size="7.2" fill="#4d4d4d" font-weight="bold" text-anchor="middle" textLength="39.7" lengthAdjust="spacingAndGlyphs">UK Operative</text>
<circle cx="615.5" cy="167" r="2.2" fill="#25608c"/>
<text x="615.5" y="177.3" font-size="7.2" fill="#4d4d4d" font-weight="bold" text-anchor="middle" textLength="27.1" lengthAdjust="spacingAndGlyphs">Collector</text>
<circle cx="727.2" cy="167" r="2.2" fill="#25608c"/>
<text x="727.2" y="177.3" font-size="7.2" fill="#4d4d4d" font-weight="bold" text-anchor="middle" textLength="67.2" lengthAdjust="spacingAndGlyphs">Receivables Specialist</text>
<circle cx="615.5" cy="197.8" r="2.2" fill="#25608c"/>
<text x="615.5" y="208.10000000000002" font-size="7.2" fill="#4d4d4d" font-weight="bold" text-anchor="middle" textLength="76.9" lengthAdjust="spacingAndGlyphs">Director of Compensation</text>
<circle cx="727.2" cy="197.8" r="2.2" fill="#25608c"/>
<text x="727.2" y="208.10000000000002" font-size="7.2" fill="#4d4d4d" font-weight="bold" text-anchor="middle" textLength="61.5" lengthAdjust="spacingAndGlyphs">Vice President of HR</text>
<circle cx="615.5" cy="229.7" r="2.2" fill="#25608c"/>
<text x="615.5" y="240.0" font-size="7.2" fill="#4d4d4d" font-weight="bold" text-anchor="middle" textLength="48.4" lengthAdjust="spacingAndGlyphs">General Laborer</text>
<circle cx="727.2" cy="229.7" r="2.2" fill="#25608c"/>
<text x="727.2" y="240.0" font-size="7.2" fill="#4d4d4d" font-weight="bold" text-anchor="middle" textLength="105.2" lengthAdjust="spacingAndGlyphs">Customer Service Representative 1</text>
<circle cx="615.5" cy="260.8" r="2.2" fill="#25608c"/>
<text x="615.5" y="271.1" font-size="7.2" fill="#4d4d4d" font-weight="bold" text-anchor="middle" textLength="28.5" lengthAdjust="spacingAndGlyphs">HC Nurse</text>
<circle cx="727.2" cy="260.8" r="2.2" fill="#25608c"/>
<text x="727.2" y="271.1" font-size="7.2" fill="#4d4d4d" font-weight="bold" text-anchor="middle" textLength="60.5" lengthAdjust="spacingAndGlyphs">HC Unit Coordinator</text>
<circle cx="615.5" cy="292.3" r="2.2" fill="#25608c"/>
<text x="615.5" y="302.6" font-size="7.2" fill="#4d4d4d" font-weight="bold" text-anchor="middle" textLength="79.1" lengthAdjust="spacingAndGlyphs">Junior Service Desk Agent</text>
<circle cx="727.2" cy="292.3" r="2.2" fill="#25608c"/>
<text x="727.2" y="302.6" font-size="7.2" fill="#4d4d4d" font-weight="bold" text-anchor="middle" textLength="63.1" lengthAdjust="spacingAndGlyphs">Service Desk Analyst</text>
<circle cx="727.2" cy="324" r="2.2" fill="#25608c"/>
<text x="727.2" y="334.3" font-size="7.2" fill="#4d4d4d" font-weight="bold" text-anchor="middle" textLength="51.5" lengthAdjust="spacingAndGlyphs">Program Director</text>
<circle cx="615.5" cy="350.8" r="2.2" fill="#25608c"/>
<text x="615.5" y="361.1" font-size="7.2" fill="#4d4d4d" font-weight="bold" text-anchor="middle" textLength="68.6" lengthAdjust="spacingAndGlyphs">Lead Project Specialist</text>
<circle cx="727.2" cy="350.8" r="2.2" fill="#25608c"/>
<text x="727.2" y="361.1" font-size="7.2" fill="#4d4d4d" font-weight="bold" text-anchor="middle" textLength="48.7" lengthAdjust="spacingAndGlyphs">Project Manager</text>
<circle cx="615.5" cy="380" r="2.2" fill="#25608c"/>
<text x="615.5" y="390.3" font-size="7.2" fill="#4d4d4d" font-weight="bold" text-anchor="middle" textLength="33.2" lengthAdjust="spacingAndGlyphs">UK Analyst</text>
<circle cx="727.2" cy="377.7" r="2.2" fill="#25608c"/>
<text x="727.2" y="388.0" font-size="7.2" fill="#4d4d4d" font-weight="bold" text-anchor="middle" textLength="84.4" lengthAdjust="spacingAndGlyphs">Senior Service Desk Analyst</text>
<circle cx="839" cy="364" r="2.2" fill="#25608c"/>
<text x="839" y="374.3" font-size="7.2" fill="#4d4d4d" font-weight="bold" text-anchor="middle" textLength="52.2" lengthAdjust="spacingAndGlyphs">Project Specialist</text>
<circle cx="839" cy="391" r="2.2" fill="#25608c"/>
<text x="839" y="401.3" font-size="7.2" fill="#4d4d4d" font-weight="bold" text-anchor="middle" textLength="78.9" lengthAdjust="spacingAndGlyphs">Team Leader Service Desk</text>
<circle cx="615.5" cy="409" r="2.2" fill="#25608c"/>
<text x="615.5" y="419.3" font-size="7.2" fill="#4d4d4d" font-weight="bold" text-anchor="middle" textLength="36.2" lengthAdjust="spacingAndGlyphs">US Manager</text>
<circle cx="727.2" cy="409" r="2.2" fill="#25608c"/>
<text x="727.2" y="419.3" font-size="7.2" fill="#4d4d4d" font-weight="bold" text-anchor="middle" textLength="26.1" lengthAdjust="spacingAndGlyphs">US Chief</text>
<circle cx="615.5" cy="440.7" r="2.2" fill="#25608c"/>
<text x="615.5" y="451.0" font-size="7.2" fill="#4d4d4d" font-weight="bold" text-anchor="middle" textLength="38.0" lengthAdjust="spacingAndGlyphs">US Seasonal</text>
<circle cx="727.2" cy="440.7" r="2.2" fill="#25608c"/>
<text x="727.2" y="451.0" font-size="7.2" fill="#4d4d4d" font-weight="bold" text-anchor="middle" textLength="72.0" lengthAdjust="spacingAndGlyphs">US Seasonal - Part Time</text>
<rect x="1" y="479" width="885" height="1" fill="#e8e8e8"/>
<rect x="0" y="499" width="888" height="1" fill="#c8c8c8"/>
<text x="7.2" y="492.7" font-size="8.3" fill="#707070" font-weight="normal" text-anchor="start" textLength="36" lengthAdjust="spacingAndGlyphs">Overview1</text>
<text x="57.7" y="492.7" font-size="8.3" fill="#707070" font-weight="normal" text-anchor="start" textLength="19.8" lengthAdjust="spacingAndGlyphs">Gains</text>
<text x="91.9" y="492.7" font-size="8.3" fill="#707070" font-weight="normal" text-anchor="start" textLength="23.4" lengthAdjust="spacingAndGlyphs">Losses</text>
<text x="129.7" y="492.7" font-size="8.3" fill="#707070" font-weight="normal" text-anchor="start" textLength="41.5" lengthAdjust="spacingAndGlyphs">Career Path</text>
<text x="185.6" y="492.7" font-size="8.3" fill="#1e1e1e" font-weight="bold" text-anchor="start" textLength="35" lengthAdjust="spacingAndGlyphs">Overview</text>
<text x="234.2" y="492.7" font-size="8.3" fill="#707070" font-weight="normal" text-anchor="start" textLength="40.8" lengthAdjust="spacingAndGlyphs">Overview-2</text>
<rect x="178.4" y="497.6" width="49.3" height="2.4" fill="#587a52"/>
<circle cx="292.6" cy="489.5" r="4" fill="none" stroke="#333" stroke-width="0.9"/><path d="M292.6 487.3 V491.7 M290.4 489.5 H294.8" stroke="#333" stroke-width="0.9"/>
<g stroke="#86a276" stroke-width="1" fill="none"><rect x="815" y="487" width="5.5" height="5" /><path d="M816.5 492 L817.7 494.5 L819 492"/></g>
<path d="M831 490.5 L834 487 L834 489.5 L837.5 489.5 M837.5 491 L834.5 494.5 L834.5 492 L831 492" stroke="#6aa055" stroke-width="1.1" fill="none"/>
<rect x="854.2" y="486.5" width="8.6" height="8.6" fill="none" stroke="#222" stroke-width="1.1"/><rect x="854.2" y="486.5" width="3" height="8.6" fill="#222"/>
<rect x="870.5" y="486.5" width="8.6" height="8.6" fill="none" stroke="#222" stroke-width="1.1"/><rect x="874" y="488" width="1.5" height="5.5" fill="#222"/>
</svg>
</body></html>
